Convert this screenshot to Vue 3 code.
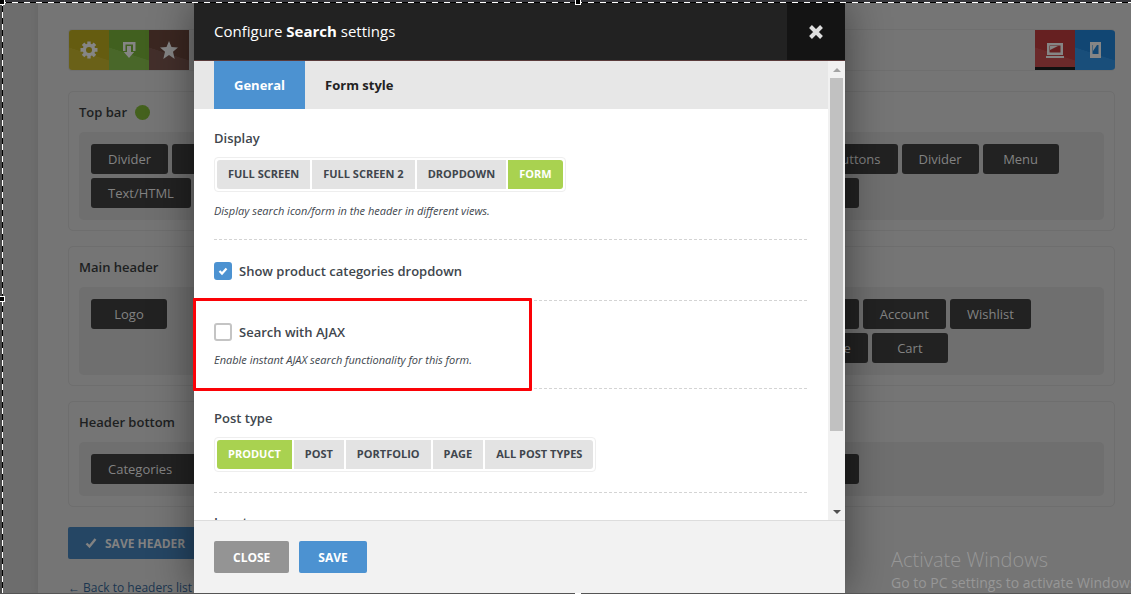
<script setup>
import { ref } from 'vue'

const panels = [
  { title: 'Top bar', dot: true, left: ['Divider', 'Cart', 'Text/HTML'], right: ['Social buttons', 'Divider', 'Menu', 'Wishlist'] },
  { title: 'Main header', left: ['Logo'], right: ['Wishlist', 'Account', 'Wishlist', 'Compare', 'Cart'], tall: true },
  { title: 'Header bottom', left: ['Categories'], right: ['Wishlist'], wide: true },
]
const displays = ['Full screen', 'Full screen 2', 'Dropdown', 'Form']
const display = ref('Form')
const postTypes = ['Product', 'Post', 'Portfolio', 'Page', 'All post types']
const postType = ref('Product')
const tab = ref('General')
const categories = ref(true)
const ajax = ref(false)
</script>

<template>
  <div class="screen">
    <main class="builder">
      <div class="toolbar">
        <button class="tool yellow" aria-label="Settings">
          <svg viewBox="0 0 20 20" width="20" height="20"><path fill="currentColor" fill-rule="evenodd" d="M8.300 1.500h3.400v2.300l1.300.5 1.700-1.700 2.500 2.500-1.700 1.700.5 1.300h2.500v3.600H16l-.5 1.300 1.700 1.700-2.500 2.500-1.700-1.700-1.300.5v2.500H8.300V16L7 15.500l-1.700 1.700-2.500-2.500L4.500 13 4 11.700H1.500V8.100H4l.5-1.300-1.700-1.700 2.500-2.500L7 4.300l1.300-.5zM10 7a3 3 0 1 0 0 6 3 3 0 0 0 0-6z"/></svg>
        </button>
        <button class="tool green" aria-label="Import">
          <svg viewBox="0 0 20 20" width="20" height="20"><path fill="currentColor" d="M4 2h12.500v9H14V4.500H6.500V11H4zM8 6h4v6h3.200L10 18l-5.200-6H8z"/></svg>
        </button>
        <button class="tool brown" aria-label="Examples">
          <svg viewBox="0 0 20 20" width="20" height="20"><path fill="currentColor" d="m10 1 2.500 6 6.500.5-5 4.200L15.700 19 10 15l-5.700 4L6 11.700 1 7.500 7.500 7z"/></svg>
        </button>
        <span class="spacer"></span>
        <button class="tool red" aria-label="Desktop">
          <svg viewBox="0 0 20 20" width="20" height="20"><path fill="currentColor" fill-rule="evenodd" d="M2 3h16v12H2zm2.500 2.500v7h11v-7zM5 6h8L5 10zM1 16h18v2H1z"/></svg>
        </button>
        <button class="tool blue" aria-label="Mobile">
          <svg viewBox="0 0 20 20" width="20" height="20"><path fill="currentColor" fill-rule="evenodd" d="M5 2h11v16H5zm2.500 3v9h6V5zM8 5h4l-4 6z"/></svg>
        </button>
      </div>

      <section v-for="p in panels" :key="p.title" class="panel">
        <h3>{{ p.title }}<span v-if="p.dot" class="dot"></span></h3>
        <div class="zone" :class="{ tall: p.tall }">
          <div class="chips left" :class="{ wide: p.wide }">
            <button v-for="(c, i) in p.left" :key="i" class="chip">{{ c }}</button>
          </div>
          <div class="chips right">
            <button v-for="(c, i) in p.right" :key="i" class="chip">{{ c }}</button>
          </div>
        </div>
      </section>

      <button class="save-header">
        <svg viewBox="0 0 12 12" width="12" height="12"><path d="M1.500 6.500 4.500 9.500 10.500 2" fill="none" stroke="currentColor" stroke-width="2.400"/></svg>
        SAVE HEADER
      </button>
      <div class="back"><a href="#">← Back to headers list</a></div>
    </main>

    <div class="watermark">
      <div class="wm-title">Activate Windows</div>
      <div class="wm-text">Go to PC settings to activate Windows.</div>
    </div>

    <div class="modal" role="dialog" aria-label="Configure Search settings">
      <header class="modal-head">
        <h2>Configure <b>Search</b> settings</h2>
        <button class="x" aria-label="Close dialog">
          <svg viewBox="0 0 16 16" width="16" height="16"><path d="m2.500 2.500 11 11m0-11-11 11" stroke="#dedede" stroke-width="4"/></svg>
        </button>
      </header>
      <div class="modal-body">
        <div class="content">
          <nav class="tabs">
            <button v-for="t in ['General', 'Form style']" :key="t" :class="{ on: tab === t }" @click="tab = t">{{ t }}</button>
          </nav>
          <div class="fields">
            <div class="field">
              <h4>Display</h4>
              <div class="group">
                <button v-for="d in displays" :key="d" :class="{ on: display === d }" @click="display = d">{{ d }}</button>
              </div>
              <p>Display search icon/form in the header in different views.</p>
            </div>
            <div class="field">
              <label class="check">
                <input v-model="categories" type="checkbox">
                <svg viewBox="0 0 18 18"><path d="m5.500 9 2.500 2.600 4.500-5" fill="none" stroke="#fff" stroke-width="2.200"/></svg>
                <span>Show product categories dropdown</span>
              </label>
            </div>
            <div class="field">
              <label class="check">
                <input v-model="ajax" type="checkbox">
                <svg viewBox="0 0 18 18"><path d="m5.500 9 2.500 2.600 4.500-5" fill="none" stroke="#fff" stroke-width="2.200"/></svg>
                <span>Search with AJAX</span>
              </label>
              <p>Enable instant AJAX search functionality for this form.</p>
              <div class="marker"></div>
            </div>
            <div class="field">
              <h4>Post type</h4>
              <div class="group">
                <button v-for="d in postTypes" :key="d" :class="{ on: postType === d }" @click="postType = d">{{ d }}</button>
              </div>
            </div>
            <div class="field"><h4>Input</h4></div>
          </div>
        </div>
        <div class="scrollbar">
          <i class="arrow up"></i>
          <div class="track"><div class="thumb"></div></div>
          <i class="arrow down"></i>
        </div>
      </div>
      <footer>
        <button class="close">CLOSE</button>
        <button class="save">SAVE</button>
      </footer>
    </div>

    <div class="frame-top"></div>
    <div class="frame-left"></div>
    <div class="frame-bottom"></div>
    <span class="handle tl"></span>
    <span class="handle tc"></span>
    <span class="handle ml"></span>
    <span class="handle bc"></span>
  </div>
</template>

<style>
body { background: #757575; overflow: hidden; }
</style>

<style scoped>
* { box-sizing: border-box; }
button { font: inherit; border: 0; margin: 0; cursor: pointer; white-space: nowrap; }
svg { display: block; }
.screen {
  position: relative; height: 100vh; overflow: hidden;
  font-family: "Open Sans", "Noto Sans", sans-serif; font-size: 13px; color: #40464d;
  background: #6d6d6d;
}
.builder {
  margin-left: 38px; height: 100%; overflow: hidden; padding: 29px 16px 0 30px;
  background: #757575; box-shadow: 0 0 8px rgba(0, 0, 0, .08);
}
.toolbar {
  display: flex; height: 42px; border: 1px solid #6f6f6f; border-right: 0; border-radius: 4px;
  margin-bottom: 20px; overflow: hidden;
}
.spacer { flex: 1; }
.tool { width: 40px; height: 40px; padding: 0; display: grid; place-items: center; color: #858585; }
.yellow { background: linear-gradient(198deg, #655c10 57%, #6a6118 58%); }
.green { background: linear-gradient(198deg, #41601f 57%, #496729 58%); }
.brown { background: linear-gradient(198deg, #3b2721 57%, #432f2b 58%); }
.red { background: linear-gradient(198deg, #662021 57%, #6b292a 58%); box-shadow: inset 0 -3px #101010; }
.blue { background: linear-gradient(198deg, #114673 57%, #194e7a 58%); }

.panel {
  border: 1px solid #6e6e6e; border-radius: 5px; padding: 0 10px 10px; margin-bottom: 15px;
}
.panel h3 {
  margin: 0; height: 40px; display: flex; align-items: center; gap: 8px;
  font-size: 13px; font-weight: 600; color: #1d1f21;
}
.dot { width: 15px; height: 15px; border-radius: 50%; background: #44611d; }
.zone {
  display: flex; justify-content: space-between; padding: 12px; border-radius: 5px; background: #6f6f6f;
}
.zone.tall { min-height: 88px; }
.chips { display: flex; flex-wrap: wrap; align-content: flex-start; gap: 4px; }
.chips.left { width: 180px; }
.chips.right { width: 314px; }
.chip {
  min-width: 76px; height: 30px; padding: 0 17px; border-radius: 3px; background: #222; color: #828282;
  font-size: 13px; text-align: center;
}
.wide .chip { min-width: 140px; text-align: left; }
.save-header {
  display: flex; align-items: center; gap: 8px; height: 32px; margin-top: 20px; padding: 0 20px 0 17px;
  border-radius: 2px; background: #254664; color: #828282; font-size: 12px; font-weight: 700;
}
.back { margin-top: 19px; font-size: 12px; line-height: 20px; }
.back a { color: #1b3550; text-decoration: none; }

.watermark { position: absolute; left: 891px; right: 0; bottom: 0; overflow: hidden; color: #979797; white-space: nowrap; }
.wm-title { font-size: 20px; line-height: 24px; font-weight: 300; }
.wm-text { font-size: 14px; line-height: 22px; }

.modal {
  position: absolute; left: 194px; right: 286px; top: 3px; bottom: 1px;
  display: flex; flex-direction: column; background: #fff; box-shadow: 0 0 40px rgba(0, 0, 0, .45);
}
.modal-head { display: flex; height: 58px; flex: none; background: #222; border-bottom: 1px solid #5a3b3b; }
.modal-head h2 { flex: 1; margin: 0; padding-left: 20px; font-size: 15px; font-weight: 400; line-height: 57px; color: #fff; }
.modal-head b { font-weight: 700; }
.x { width: 58px; display: grid; place-items: center; padding: 0; background: #141414; }
.modal-body { flex: 1; min-height: 0; display: flex; }
.content { flex: 1; min-width: 0; clip-path: inset(0 0 0 -2px); }
.tabs { display: flex; height: 48px; padding: 0 20px; background: #e7e7e7; }
.tabs button { padding: 0 20px; background: none; color: #222; font-size: 13px; font-weight: 700; }
.tabs .on { background: #4c92d1; color: #fff; }
.fields { padding: 0 20px; }
.field { position: relative; padding: 21px 0 19px; }
.field::after {
  content: ""; position: absolute; left: 0; right: 0; bottom: -1px; height: 1px;
  background: repeating-linear-gradient(90deg, #d4d4d4 0 3px, transparent 3px 5px);
}
.field + .field { margin-top: 1px; }
.field h4 { margin: 0 0 11px; font-size: 13px; line-height: 16px; font-weight: 600; }
.field p { margin: 10px 0 0; font-size: 11px; line-height: 18px; font-style: italic; }
.check + p { margin-top: 9px; }
.group {
  display: flex; width: max-content; gap: 2px; padding: 2px; border: 1px solid #eee; border-radius: 4px;
}
.group:last-child { margin-bottom: 21px; margin-bottom: 1px; }
.group button {
  height: 29px; padding: 0 11px 2px; background: #e3e3e3; color: #40464d;
  font-size: 11px; font-weight: 700; text-transform: uppercase;
}
.group button:first-child { border-radius: 3px 0 0 3px; }
.group button:last-child { border-radius: 0 3px 3px 0; }
.group button.on { background: #a9d250; color: #fff; }
.check { display: grid; grid-template-columns: 18px 1fr; align-items: center; height: 20px; column-gap: 7px; font-weight: 600; }
.check input {
  appearance: none; grid-area: 1 / 1; width: 18px; height: 18px; margin: 0;
  border: 2px solid #c4c4c4; border-radius: 3px; background: #fff;
}
.check input:checked { background: #4c92d1; border-color: #4c92d1; }
.check svg { grid-area: 1 / 1; width: 18px; height: 18px; pointer-events: none; }
.marker {
  position: absolute; z-index: 2; left: -21px; top: -3px; bottom: -3px; width: 339px;
  border: 3px solid #fb0207; border-radius: 1px;
}
.scrollbar { width: 17px; flex: none; display: flex; flex-direction: column; align-items: center; background: #f1f1f1; }
.track { flex: 1; width: 13px; }
.thumb { height: 83%; background: #c1c1c1; }
.arrow { width: 17px; height: 17px; display: grid; place-items: center; }
.arrow::before { content: ""; border: 4px solid transparent; }
.arrow.up::before { border-top: 0; border-bottom-color: #a3a3a3; }
.arrow.down::before { border-bottom: 0; border-top-color: #505050; }
footer {
  position: relative; z-index: 1; flex: none; display: flex; gap: 10px; padding: 20px;
  border-top: 1px solid #ddd; background: #f2f2f2;
}
footer button { height: 32px; padding: 0 19px; border-radius: 2px; color: #fff; font-size: 12px; font-weight: 700; }
.close { background: #949494; }
.save { background: #4c92d1; }

.frame-top, .frame-left, .frame-bottom { position: absolute; pointer-events: none; }
.frame-top {
  left: 0; right: 0; top: 0; height: 3px; border-top: 2px solid #38383d;
  background: repeating-linear-gradient(90deg, #fff 0 6px, #000 6px 12px);
}
.frame-left {
  left: 0; top: 0; bottom: 0; width: 3px; border-left: 2px solid #4a4a4a;
  background: repeating-linear-gradient(180deg, #fff 0 6px, #000 6px 12px);
}
.frame-bottom { left: 0; right: 0; bottom: 0; height: 1px; background: #555; }
.handle { position: absolute; width: 6px; height: 6px; background: #000; border: 1px solid #fff; }
.tl { left: -1px; top: -1px; }
.tc { left: 575px; top: -1px; }
.ml { left: -1px; top: 296px; }
.bc { left: 575px; bottom: -5px; }
</style>
